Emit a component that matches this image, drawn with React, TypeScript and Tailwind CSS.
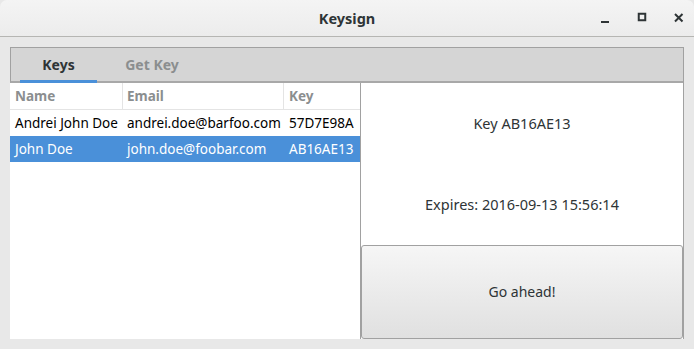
import React from 'react';

const ROWS = [
  { name: 'Andrei John Doe', email: 'andrei.doe@barfoo.com', key: '57D7E98A', selected: false },
  { name: 'John Doe', email: 'john.doe@foobar.com', key: 'AB16AE13', selected: true },
];

const FONT = { fontFamily: '"Noto Sans", "Open Sans", sans-serif' };

export default function App() {
  return (
    <div className="w-[694px] h-[349px] bg-[#e8e8e8] flex flex-col overflow-hidden text-[#2e3436]" style={FONT}>
      {/* Title bar */}
      <div className="h-[37px] shrink-0 rounded-t-[7px] bg-gradient-to-b from-[#f4f4f4] to-[#ececec] border-b border-[#b6b6b3] flex items-center relative">
        <div className="flex-1 text-center text-[14.5px] font-bold leading-none">Keysign</div>
        <div className="absolute right-0 top-0 h-full flex items-center gap-[25px] pr-[9px]">
          <svg width="12" height="12" viewBox="0 0 12 12"><rect x="2" y="9" width="8" height="2" fill="#2e3436" /></svg>
          <svg width="12" height="12" viewBox="0 0 12 12"><rect x="2.75" y="1.75" width="6.5" height="6.5" fill="none" stroke="#2e3436" strokeWidth="2" /></svg>
          <svg width="12" height="12" viewBox="0 0 12 12"><path d="M2 2 L9.5 9.5 M9.5 2 L2 9.5" stroke="#2e3436" strokeWidth="2" /></svg>
        </div>
      </div>

      {/* Notebook */}
      <div className="flex-1 flex flex-col mt-[10px] mx-[10px] mb-[10px] border border-[#a1a1a1] border-b-0 border-l-0">
        <div className="h-[35px] shrink-0 bg-[#d5d5d5] border-b-[2px] border-[#a8a8a8] border-l border-l-[#a1a1a1] flex items-end pl-[9px] text-[14px] font-bold">
          <div className="w-[77px] h-full flex flex-col">
            <div className="flex-1 flex items-center justify-center text-[#2e3436]">Keys</div>
            <div className="h-[3px] bg-[#4a90d9] -mb-[2px]" />
          </div>
          <div className="w-[110px] h-full flex items-center justify-center text-[#8b8e8f]">Get Key</div>
        </div>

        <div className="flex-1 flex min-h-0">
          {/* Key list */}
          <div className="w-[351px] bg-white border-r border-[#a1a1a1] text-[13.5px]">
            <div className="flex h-[27px] border-b border-[#e4e4e4] font-bold text-[#8b8e8f]">
              <div className="w-[113px] pl-[5px] flex items-center border-r border-[#e4e4e4]">Name</div>
              <div className="w-[161px] pl-[4px] flex items-center border-r border-[#e4e4e4]">Email</div>
              <div className="flex-1 pl-[5px] flex items-center">Key</div>
            </div>
            {ROWS.map(r => (
              <div
                key={r.key}
                className={`flex h-[26px] items-center ${r.selected ? 'bg-[#4a90d9] text-white' : 'text-black'}`}
              >
                <div className="w-[113px] pl-[5px] whitespace-nowrap">{r.name}</div>
                <div className="w-[161px] pl-[4px] whitespace-nowrap">{r.email}</div>
                <div className="flex-1 pl-[5px] whitespace-nowrap">{r.key}</div>
              </div>
            ))}
          </div>

          {/* Details */}
          <div className="flex-1 flex flex-col bg-white text-[14.5px]">
            <div className="flex-1 flex flex-col items-center">
              <p className="mt-[30px]">Key AB16AE13</p>
              <p className="mt-[59px]">Expires: 2016-09-13 15:56:14</p>
            </div>
            <button className="h-[94px] shrink-0 rounded-[3px] border border-[#a1a1a1] bg-gradient-to-b from-[#f6f6f6] to-[#e0e0e0] text-[14px] text-[#2e3436] pb-[2px]">
              Go ahead!
            </button>
          </div>
        </div>
      </div>
    </div>
  );
}
